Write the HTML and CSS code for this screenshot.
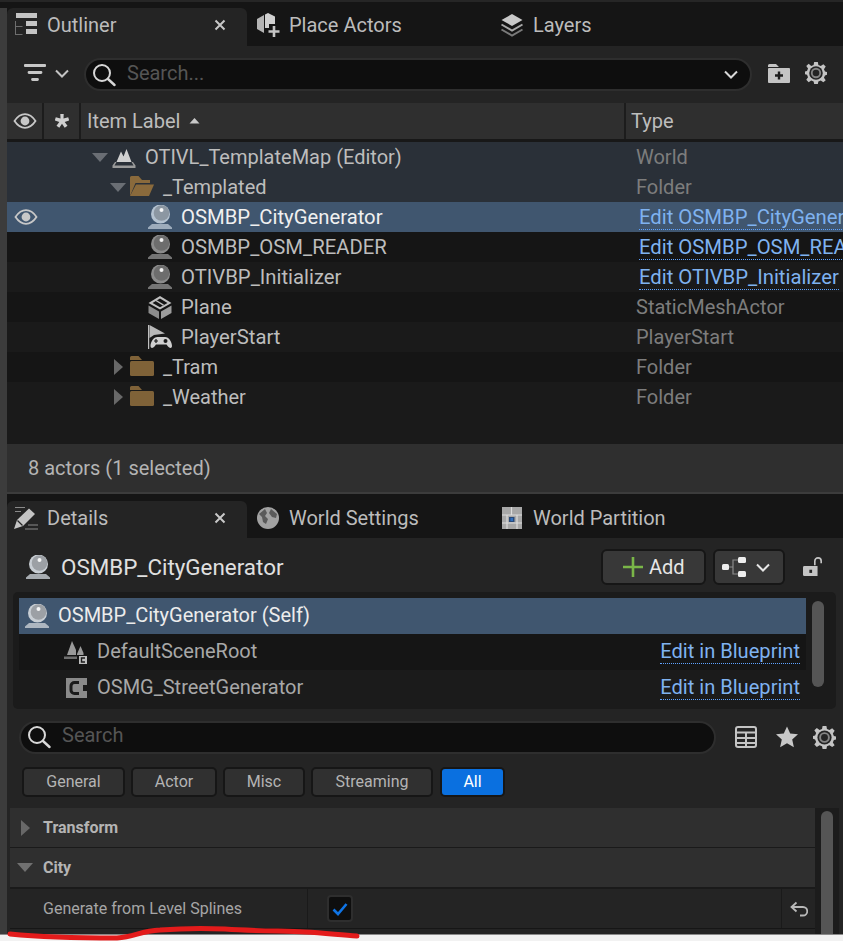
FILE: index.html
```html
<!DOCTYPE html>
<html>
  <head>
    <title>Outliner and Details</title>
    <link rel="stylesheet" href="styles.css">
  </head>
  <body>
    <!-- shared icons -->
    <svg class="icon-defs" width="0" height="0">
      <symbol id="i-eye" viewBox="0 0 24 24">
        <path d="M1.500 12C5 6.800 8.400 5.200 12 5.200S19 6.800 22.500 12C19 17.200 15.600 18.800 12 18.800S5 17.200 1.500 12Z" fill="none" stroke="currentColor" stroke-width="1.800"/>
        <circle cx="12" cy="12" r="4.400" fill="currentColor"/>
      </symbol>
      <symbol id="i-search" viewBox="0 0 24 24">
        <circle cx="10" cy="10" r="8" fill="none" stroke="currentColor" stroke-width="2"/>
        <path d="M16 16l6.500 6" stroke="currentColor" stroke-width="2.400" stroke-linecap="round"/>
      </symbol>
      <symbol id="i-chevron" viewBox="0 0 14 9">
        <path d="M1 1.500l6 6 6-6" fill="none" stroke="currentColor" stroke-width="2"/>
      </symbol>
      <symbol id="i-gear" viewBox="0 0 24 24">
        <path d="M10 0h4l.6 3.200 2.600 1.100L20 2.400 22.600 5l-1.900 2.800 1.100 2.600L24 11v3l-2.200.6-1.100 2.600 1.900 2.800L20 22l-2.800-1.900-2.600 1.100L14 24h-4l-.6-2.800-2.600-1.100L4 22l-2.600-2.600 1.900-2.800-1.100-2.600L0 13.400V10.400l2.200-.6 1.100-2.600L1.400 4.400 4 2l2.800 2.300 2.600-1.100Z" fill="currentColor"/>
        <circle cx="12" cy="12" r="7.400" fill="#242424"/>
        <circle cx="12" cy="12" r="4.600" fill="none" stroke="currentColor" stroke-opacity=".6" stroke-width="2"/>
      </symbol>
      <symbol id="i-actor" viewBox="0 0 24 24">
        <path d="M4 19h16l4 3.500V24H0v-1.500Z" fill="currentColor" fill-opacity=".8"/>
        <circle cx="12.500" cy="9" r="9.500" fill="currentColor"/>
        <circle cx="13.500" cy="8" r="7.800" fill="#000" fill-opacity=".22"/>
        <circle cx="13.500" cy="5" r="2" fill="#fff" fill-opacity=".9"/>
      </symbol>
      <symbol id="i-folder" viewBox="0 0 24 24">
        <path d="M0 2.500A1.500 1.500 0 0 1 1.500 1h7L12 5H0Z" fill="#7f6238"/>
        <rect x="0" y="6" width="24" height="15" rx="1.500" fill="#7f6238"/>
      </symbol>
      <symbol id="i-folder-open" viewBox="0 0 24 24">
        <path d="M0 21V2.500A1.500 1.500 0 0 1 1.500 1h7L12 5h8v3H5.500Z" fill="#8a6a3c"/>
        <path d="M0 21L6 9.500h18L19 21Z" fill="#8a6a3c"/>
      </symbol>
    </svg>

    <div class="top-line"></div>

    <div class="panels">
      <section class="outliner">
        <div class="tabs">
          <div class="tab tab-active">
            <svg class="tab-icon" viewBox="0 0 24 24">
              <path d="M2 0h21v5H2Z M12 8h11v5H12Z M12 16h11v5H12Z" fill="#c4c4c4"/>
              <path d="M1.500 8v14 M1.500 13.500h7 M1.500 21.500h7" fill="none" stroke="#6e6e6e" stroke-width="1"/>
            </svg>
            <span>Outliner</span>
            <svg class="tab-close" viewBox="0 0 12 12"><path d="M1.500 1.500l9 9M10.500 1.500l-9 9" stroke="#c8c8c8" stroke-width="2"/></svg>
          </div>
          <div class="tab">
            <svg class="tab-icon" viewBox="0 0 24 24">
              <path d="M1 6L8 2v18l-7-4Z" fill="#b4b4b4"/>
              <path d="M9 1.500L12 0l7 3.500V11h-6v4H9Z" fill="#d0d0d0"/>
              <path d="M18 13v11M12.500 18.500h11" stroke="#c4c4c4" stroke-width="2.600"/>
            </svg>
            <span>Place Actors</span>
          </div>
          <div class="tab">
            <svg class="tab-icon" viewBox="0 0 24 24">
              <path d="M12 1l10.500 6L12 13 1.500 7Z" fill="#c8c8c8"/>
              <path d="M1.500 11.500L12 17.500l10.500-6" fill="none" stroke="#a8a8a8" stroke-width="2"/>
              <path d="M1.500 16.500L12 22.500l10.500-6" fill="none" stroke="#7a7a7a" stroke-width="2"/>
            </svg>
            <span>Layers</span>
          </div>
        </div>

        <div class="toolbar">
          <svg class="filter-icon" viewBox="0 0 22 20">
            <path d="M1 2.500h20M5 9.500h12M8.500 16.500h5" stroke="#c8c8c8" stroke-width="2.800" stroke-linecap="round"/>
          </svg>
          <svg class="chevron"><use href="#i-chevron"/></svg>
          <div class="search search-outliner">
            <svg class="search-icon"><use href="#i-search"/></svg>
            <span class="search-hint">Search...</span>
            <svg class="chevron search-chevron"><use href="#i-chevron"/></svg>
          </div>
          <svg class="tool-icon" viewBox="0 0 22 22">
            <path d="M0 3.500A1.500 1.500 0 0 1 1.500 2H8l3 3H0Z" fill="#c4c4c4"/>
            <rect y="6" width="22" height="15" rx="1" fill="#c4c4c4"/>
            <path d="M11 9.500v8M7 13.500h8" stroke="#1c1c1c" stroke-width="2.400"/>
          </svg>
          <svg class="tool-icon gear"><use href="#i-gear"/></svg>
        </div>

        <div class="col-head">
          <div class="col col-eye"><svg class="eye"><use href="#i-eye"/></svg></div>
          <div class="col col-star">
            <svg class="star-small" viewBox="0 0 14 14"><path d="M5.300 0h3.400l-.2 4.600 4.700-1.300 1 3.200-4.500 1.400 2.800 3.800-2.800 2L7 9.800l-2.700 3.900-2.800-2 2.800-3.800L-.2 6.500l1-3.200 4.700 1.300Z" fill="#d0d0d0"/></svg>
          </div>
          <div class="col col-label">Item Label
            <svg class="sort-arrow" viewBox="0 0 10 6"><path d="M5 0l5 5.500H0Z" fill="#c8c8c8"/></svg>
          </div>
          <div class="col col-type">Type</div>
        </div>

        <div class="rows">
          <div class="row row-parent">
            <div class="cell-eye"></div>
            <div class="cell-label level-0">
              <span class="arrow-down"></span>
              <svg class="item-icon" viewBox="0 0 24 24">
                <path d="M4.500 17L9 6.500l2.500 5L14.500 4l5 13Z" fill="#d0d0d0"/>
                <path d="M0.500 23v-2.500L3 17h1.500l-2 3.500h19l-2-3.500H21l2.500 3.500V23Z" fill="#9a9a9a"/>
              </svg>
              <span>OTIVL_TemplateMap (Editor)</span>
            </div>
            <div class="cell-type">World</div>
          </div>
          <div class="row row-parent">
            <div class="cell-eye"></div>
            <div class="cell-label level-1">
              <span class="arrow-down"></span>
              <svg class="item-icon"><use href="#i-folder-open"/></svg>
              <span>_Templated</span>
            </div>
            <div class="cell-type">Folder</div>
          </div>
          <div class="row row-selected">
            <div class="cell-eye"><svg class="eye"><use href="#i-eye"/></svg></div>
            <div class="cell-label level-2">
              <svg class="item-icon actor-light"><use href="#i-actor"/></svg>
              <span>OSMBP_CityGenerator</span>
            </div>
            <div class="cell-type"><a class="link">Edit OSMBP_CityGenerator</a></div>
          </div>
          <div class="row row-dark">
            <div class="cell-eye"></div>
            <div class="cell-label level-2">
              <svg class="item-icon actor"><use href="#i-actor"/></svg>
              <span>OSMBP_OSM_READER</span>
            </div>
            <div class="cell-type"><a class="link">Edit OSMBP_OSM_READER</a></div>
          </div>
          <div class="row">
            <div class="cell-eye"></div>
            <div class="cell-label level-2">
              <svg class="item-icon actor"><use href="#i-actor"/></svg>
              <span>OTIVBP_Initializer</span>
            </div>
            <div class="cell-type"><a class="link">Edit OTIVBP_Initializer</a></div>
          </div>
          <div class="row row-dark">
            <div class="cell-eye"></div>
            <div class="cell-label level-2">
              <svg class="item-icon" viewBox="0 0 24 24">
                <path d="M12 1l11.500 7L12 14.500 .5 8Z M12 3.500L4.500 8l7.500 4.200L19.500 8Z" fill="#c0c0c0" fill-rule="evenodd"/>
                <path d="M8 5.500l7.500 4.600" stroke="#c0c0c0" stroke-width="1.400"/>
                <path d="M.5 10.500l10.500 6V24L.5 18Z" fill="#8c8c8c"/>
                <path d="M23.500 10.500l-10.500 6V24l10.500-6Z" fill="#9c9c9c"/>
              </svg>
              <span>Plane</span>
            </div>
            <div class="cell-type">StaticMeshActor</div>
          </div>
          <div class="row">
            <div class="cell-eye"></div>
            <div class="cell-label level-2">
              <svg class="item-icon" viewBox="0 0 24 24">
                <path d="M.6 0v24" stroke="#c0c0c0" stroke-width="1.200"/>
                <path d="M1.500 0L17 8.500 6 10l-4.500 3Z" fill="#b8b8b8"/>
                <path d="M9.500 12h7.500c4 0 7 5 7 9 0 2.500-2.500 2.500-4 .5L18.500 19.500H8l-1.500 2c-1.500 2-4 2-4-.5 0-4 3-9 7-9Z" fill="#d0d0d0"/>
                <path d="M8 14v4M6 16h4" stroke="#1a1a1a" stroke-width="1.200"/>
                <circle cx="17.500" cy="16" r="2" fill="#1a1a1a"/>
              </svg>
              <span>PlayerStart</span>
            </div>
            <div class="cell-type">PlayerStart</div>
          </div>
          <div class="row row-dark">
            <div class="cell-eye"></div>
            <div class="cell-label level-1">
              <span class="arrow-right"></span>
              <svg class="item-icon"><use href="#i-folder"/></svg>
              <span>_Tram</span>
            </div>
            <div class="cell-type">Folder</div>
          </div>
          <div class="row">
            <div class="cell-eye"></div>
            <div class="cell-label level-1">
              <span class="arrow-right"></span>
              <svg class="item-icon"><use href="#i-folder"/></svg>
              <span>_Weather</span>
            </div>
            <div class="cell-type">Folder</div>
          </div>
        </div>

        <div class="status">8 actors (1 selected)</div>
      </section>

      <section class="details">
        <div class="tabs tabs-details">
          <div class="tab tab-active">
            <svg class="tab-icon" viewBox="0 0 24 24">
              <path d="M0 23l3-9L15 2.500 21 8 9 20Z" fill="#c4c4c4"/>
              <path d="M3.500 14.500L8.500 19.500" stroke="#242424" stroke-width="1.200"/>
              <path d="M1 1.500h10M1 5.500h6M14 19h10M11 23h13" stroke="#8a8a8a" stroke-width="1"/>
            </svg>
            <span>Details</span>
            <svg class="tab-close" viewBox="0 0 12 12"><path d="M1.500 1.500l9 9M10.500 1.500l-9 9" stroke="#c8c8c8" stroke-width="2"/></svg>
          </div>
          <div class="tab">
            <svg class="tab-icon" viewBox="0 0 24 24">
              <circle cx="12" cy="12" r="11" fill="#a2a2a2"/>
              <path d="M3 8l6-5 2 4-2 3 3 3-2 5-3-2-1-5Z M15 3l6 5-1 4-4-1-3-4Z" fill="#3c3c3c" fill-opacity=".7"/>
            </svg>
            <span>World Settings</span>
          </div>
          <div class="tab">
            <svg class="tab-icon" viewBox="0 0 24 24">
              <rect x="2" y="1" width="20" height="22" fill="#a8a8a8"/>
              <path d="M11.500 1v8M2 9h20M2 17h20M7 9v14M17 9v14" stroke="#dcdcdc" stroke-width="1.200"/>
              <rect x="9" y="11" width="5.500" height="5" fill="#2a4a78"/>
              <rect x="10.500" y="12" width="2.500" height="3" fill="#2f6fc0"/>
            </svg>
            <span>World Partition</span>
          </div>
        </div>

        <div class="title-bar">
          <svg class="item-icon actor-white"><use href="#i-actor"/></svg>
          <span class="title">OSMBP_CityGenerator</span>
          <button class="btn btn-add">
            <svg class="plus" viewBox="0 0 20 20"><path d="M10 0v20M0 10h20" stroke="#7ab648" stroke-width="2.600"/></svg>
            Add
          </button>
          <button class="btn btn-tree">
            <svg class="tree-icon" viewBox="0 0 24 20">
              <rect x="0" y="7" width="7" height="6" rx="1.500" fill="#eee"/>
              <rect x="16" y="0" width="8" height="6" rx="1.500" fill="#eee"/>
              <rect x="16" y="14" width="8" height="6" rx="1.500" fill="#eee"/>
              <path d="M7 10h4M16 3h-5v14h5" fill="none" stroke="#8a8a8a" stroke-width="1.200"/>
            </svg>
            <svg class="chevron chevron-white"><use href="#i-chevron"/></svg>
          </button>
          <svg class="lock" viewBox="0 0 22 22">
            <path d="M13 9V4.500a3.500 3.500 0 0 1 7 0V7" fill="none" stroke="#c4c4c4" stroke-width="1.800"/>
            <path d="M1.500 10H16v11H1.500A1.500 1.500 0 0 1 0 19.500v-8A1.500 1.500 0 0 1 1.500 10Z" fill="#c4c4c4"/>
            <rect x="7" y="14" width="3" height="3.500" fill="#242424"/>
          </svg>
        </div>

        <div class="tree-box">
          <div class="tree-rows">
            <div class="tree-row tree-row-selected">
              <svg class="item-icon actor-white"><use href="#i-actor"/></svg>
              <span>OSMBP_CityGenerator (Self)</span>
            </div>
            <div class="tree-row tree-child tree-row-dark">
              <svg class="item-icon" viewBox="0 0 24 24">
                <path d="M3 15L8 1l4 9v5Z" fill="#9a9a9a"/>
                <path d="M0 16.500h13v2.500H0Z" fill="#6e6e6e"/>
                <path d="M13 14l3.500-8 3 7v2h-6.500Z" fill="#9a9a9a"/>
                <rect x="15" y="16" width="8" height="8" fill="#bcbcbc"/>
                <path d="M21 18h-3.500v4H21" fill="none" stroke="#1a1a1a" stroke-width="1.400"/>
              </svg>
              <span>DefaultSceneRoot</span>
              <a class="link link-right">Edit in Blueprint</a>
            </div>
            <div class="tree-row tree-child">
              <svg class="item-icon c-icon" viewBox="0 0 24 24">
                <path d="M2 2h21v7h-4v6h4v7H2Z" fill="#8a8a8a"/>
                <path d="M15 6.500H10.500A3.500 3.500 0 0 0 7 10v4a3.500 3.500 0 0 0 3.500 3.500H15" fill="none" stroke="#1a1a1a" stroke-width="3"/>
              </svg>
              <span>OSMG_StreetGenerator</span>
              <a class="link link-right">Edit in Blueprint</a>
            </div>
          </div>
          <div class="tree-track"><div class="tree-thumb"></div></div>
        </div>

        <div class="filter-bar">
          <div class="search search-details">
            <svg class="search-icon"><use href="#i-search"/></svg>
            <span class="search-hint">Search</span>
          </div>
          <svg class="tool-icon table-icon" viewBox="0 0 22 22">
            <rect x="1" y="1" width="20" height="20" rx="2" fill="none" stroke="#c4c4c4" stroke-width="2"/>
            <path d="M1 6.500h20M1 12h20M1 17h20" stroke="#c4c4c4" stroke-width="2"/>
            <path d="M11 7v14" stroke="#c4c4c4" stroke-width="2"/>
          </svg>
          <svg class="tool-icon star" viewBox="0 0 22 22"><path d="M11 .5l3.200 7 7.800.8-5.800 5.200 1.700 7.700L11 17.200l-6.900 4 1.700-7.700L0 8.300l7.800-.8Z" fill="#c8c8c8"/></svg>
          <svg class="tool-icon gear gear-details"><use href="#i-gear"/></svg>
        </div>

        <div class="chips">
          <span class="chip chip-general">General</span>
          <span class="chip chip-actor">Actor</span>
          <span class="chip chip-misc">Misc</span>
          <span class="chip chip-streaming">Streaming</span>
          <span class="chip chip-all">All</span>
        </div>

        <div class="props">
          <div class="props-list">
            <div class="prop-section">
              <span class="arrow-right arrow-section"></span>
              <span>Transform</span>
            </div>
            <div class="prop-section prop-section-open">
              <span class="arrow-down arrow-section-down"></span>
              <span>City</span>
            </div>
            <div class="prop-row">
              <div class="prop-name">Generate from Level Splines</div>
              <div class="prop-value">
                <span class="checkbox">
                  <svg viewBox="0 0 16 14"><path d="M1.500 7.500l4.500 4.500 8.500-10" fill="none" stroke="#0f74e6" stroke-width="2.600"/></svg>
                </span>
              </div>
              <div class="prop-reset">
                <svg viewBox="0 0 18 16"><path d="M6.500 1.500L1.500 6l5 4.500M1.500 6H13a4 4 0 0 1 0 8.500H10" fill="none" stroke="#b8b8b8" stroke-width="1.800"/></svg>
              </div>
            </div>
          </div>
          <div class="props-track"><div class="props-thumb"></div></div>
        </div>
      </section>
    </div>

    <!-- red marker stroke drawn over the screenshot -->
    <svg class="marker" viewBox="0 0 843 941">
      <path d="M10 934C40 937 85 938 117 938C135 937 140 931 160 930C185 928 205 928 225 929C255 931 285 931 305 932C325 933 340 935 357 936" fill="none" stroke="#e31b1b" stroke-width="5" stroke-linecap="round"/>
    </svg>
  </body>
</html>
```

FILE: styles.css
```css
/* Editor panels, dark theme */
html {
  background-color: #f2f2f2;
}
body {
  position: relative;
  width: 843px;
  height: 941px;
  margin: 0;
  overflow: hidden;
  font-family: Roboto, "Liberation Sans", sans-serif;
  font-size: 20px;
  color: #bdbdbd;
}
svg {
  display: block;
  flex: none;
}
.icon-defs {
  position: absolute;
}

.top-line {
  height: 6px;
  background-color: #151515;
  border-top: 2px solid #262626;
}
.panels {
  height: 926px;
  padding-left: 7px;
  background-color: #3c3c3c;
  border-bottom: 1px solid #8a8a8a;
}

/* tabs */
.tabs {
  display: flex;
  height: 38px;
  background-color: #151515;
}
.tabs-details {
  height: 44px;
  padding-top: 7px;
  box-sizing: border-box;
}
.tab {
  display: flex;
  align-items: center;
  gap: 9px;
  width: 244px;
  padding: 0 0 4px 9px;
  box-sizing: border-box;
  color: #bcbcbc;
}
.tabs-details .tab {
  padding-bottom: 3px;
}
.tab-active,
.tabs-details .tab-active {
  width: 240px;
  padding-left: 7px;
  background-color: #242424;
  border-radius: 6px 6px 0 0;
}
.tab-icon {
  width: 24px;
  height: 24px;
}
.tab-close {
  width: 12px;
  height: 12px;
  margin-left: auto;
  margin-right: 21px;
}

/* outliner */
.outliner {
  height: 484px;
  display: flex;
  flex-direction: column;
}
.toolbar {
  display: flex;
  align-items: center;
  height: 57px;
  padding: 0 16px 3px 17px;
  box-sizing: border-box;
  background-color: #242424;
}
.filter-icon {
  width: 22px;
  height: 20px;
}
.chevron {
  width: 14px;
  height: 9px;
  color: #c4c4c4;
}
.toolbar > .chevron {
  margin-left: 9px;
}
.search {
  display: flex;
  align-items: center;
  background-color: #0e0e0e;
  border: 2px solid #2e2e2e;
  border-radius: 17px;
  box-sizing: border-box;
  height: 33px;
}
.search-outliner {
  width: 668px;
  margin: 3px 0 0 15px;
  padding: 0 12px 0 6px;
}
.search-icon {
  width: 24px;
  height: 24px;
  color: #d8d8d8;
}
.search-hint {
  margin-left: 11px;
  padding-bottom: 4px;
  color: #555;
}
.search-chevron {
  margin-left: auto;
  color: #d8d8d8;
}
.tool-icon {
  width: 22px;
  height: 22px;
}
.toolbar .tool-icon {
  margin-left: 16px;
}
.toolbar .gear {
  color: #c4c4c4;
  margin-left: 15px;
}

.col-head {
  display: flex;
  flex: none;
  height: 36px;
  background-color: #2f2f2f;
  border-bottom: 3px solid #181818;
}
.col {
  display: flex;
  align-items: center;
  border-right: 2px solid #1c1c1c;
  box-sizing: border-box;
}
.col-eye {
  width: 37px;
  justify-content: center;
}
.col-star {
  width: 37px;
  justify-content: center;
}
.col-label {
  width: 545px;
  padding-left: 6px;
  gap: 9px;
}
.col-type {
  padding-left: 5px;
  border-right: 0;
}
.eye {
  width: 24px;
  height: 24px;
  color: #c8c8c8;
}
.star-small {
  width: 14px;
  height: 14px;
}
.sort-arrow {
  width: 11px;
  height: 6px;
}

.rows {
  flex: 1;
  background-color: #1a1a1a;
}
.row {
  display: flex;
  align-items: center;
  height: 30px;
  overflow: hidden;
  white-space: nowrap;
}
.row-dark {
  background-color: #151515;
}
.row-parent {
  background-color: #2a3038;
}
.row-selected {
  background-color: #40566f;
  color: #f0f0f0;
}
.cell-eye {
  display: flex;
  justify-content: center;
  width: 37px;
  flex: none;
}
.cell-label {
  display: flex;
  align-items: center;
  width: 592px;
  flex: none;
  box-sizing: border-box;
}
.level-0 {
  padding-left: 48px;
}
.level-1 {
  padding-left: 66px;
}
.level-2 {
  padding-left: 104px;
  font-size: 20.3px;
}
.cell-type {
  color: #7d7d7d;
}
.item-icon {
  width: 24px;
  height: 24px;
  margin-right: 9px;
}
.actor {
  color: #8c8c8c;
}
.actor-light {
  color: #b4c2d0;
}
.actor-white {
  color: #c8ced4;
}
.arrow-down {
  width: 0;
  height: 0;
  margin-right: 4px;
  border-left: 8px solid transparent;
  border-right: 8px solid transparent;
  border-top: 9px solid #6a6e74;
}
.arrow-right {
  width: 0;
  height: 0;
  margin-right: 7px;
  margin-left: 4px;
  border-top: 8px solid transparent;
  border-bottom: 8px solid transparent;
  border-left: 9px solid #686868;
}
.link {
  color: #7fb2f0;
  border-bottom: 1px dotted #5ea2ff;
  line-height: 23px;
  display: inline-block;
}
.row .link {
  margin-left: 3px;
  font-size: 20.3px;
}
.status {
  height: 48px;
  padding-left: 21px;
  display: flex;
  align-items: center;
  background-color: #2f2f2f;
  color: #b4b4b4;
  flex: none;
}

/* details */
.details {
  height: 440px;
  margin-top: 2px;
  background-color: #242424;
}
.title-bar {
  display: flex;
  align-items: center;
  height: 54px;
  padding: 4px 20px 0 19px;
  box-sizing: border-box;
}
.title {
  margin: 0 auto 0 2px;
  font-size: 22.4px;
  color: #e0e0e0;
}
.btn {
  display: flex;
  align-items: center;
  height: 36px;
  font: inherit;
  color: #e6e6e6;
  background-color: #383838;
  border: 2px solid #161616;
  border-radius: 6px;
}
.btn-add {
  width: 105px;
  padding: 0 0 0 20px;
  gap: 6px;
}
.plus {
  width: 20px;
  height: 20px;
}
.btn-tree {
  width: 72px;
  margin-left: 7px;
  padding: 0 0 0 7px;
  gap: 10px;
}
.tree-icon {
  width: 24px;
  height: 20px;
}
.chevron-white {
  color: #e6e6e6;
}
.lock {
  width: 20px;
  height: 20px;
  margin-left: 18px;
}

.tree-box {
  display: flex;
  width: 823px;
  height: 117px;
  margin-left: 6px;
  padding: 6px 0 0 6px;
  box-sizing: border-box;
  background-color: #1b1b1b;
  border-radius: 5px;
}
.tree-rows {
  width: 787px;
}
.tree-row {
  display: flex;
  align-items: center;
  height: 36px;
  padding-right: 6px;
  white-space: nowrap;
}
.tree-row span {
  margin-bottom: 2px;
}
.tree-row-selected {
  background-color: #40566f;
  color: #ececec;
  padding-left: 6px;
}
.tree-row-selected .item-icon {
  margin-right: 9px;
}
.tree-row-dark {
  background-color: #151515;
}
.tree-child {
  padding-left: 45px;
  color: #a8a8a8;
}
.link-right {
  margin: 0 0 2px auto;
  line-height: 24px;
  font-size: 20.1px;
}
.tree-track {
  margin-left: 6px;
  padding-top: 3px;
}
.tree-thumb {
  width: 12px;
  height: 86px;
  background-color: #555;
  border-radius: 6px;
}

.filter-bar {
  display: flex;
  align-items: center;
  height: 58px;
  padding: 0 0 2px 12px;
  box-sizing: border-box;
}
.search-details {
  width: 697px;
  height: 33px;
  padding-left: 6px;
}
.table-icon {
  margin-left: 19px;
}
.star {
  margin-left: 19px;
}
.gear-details {
  margin-left: 15px;
  color: #c4c4c4;
  width: 23px;
  height: 23px;
}

.chips {
  display: flex;
  gap: 6px;
  height: 30px;
  padding-left: 15px;
}
.chip {
  display: flex;
  align-items: center;
  justify-content: center;
  box-sizing: border-box;
  height: 30px;
  padding-bottom: 1px;
  font-size: 16px;
  color: #b4b4b4;
  background-color: #303030;
  border: 2px solid #161616;
  border-radius: 5px;
}
.chip-general {
  width: 103px;
}
.chip-actor {
  width: 86px;
}
.chip-misc {
  width: 82px;
}
.chip-streaming {
  width: 122px;
}
.chip-all {
  width: 65px;
  margin-left: 1px;
  color: #fff;
  background-color: #0a70e0;
}

.props {
  display: flex;
  margin: 11px 0 0 3px;
}
.props-list {
  width: 805px;
}
.prop-section {
  display: flex;
  align-items: center;
  height: 39px;
  padding-left: 11px;
  background-color: #2f2f2f;
  border-bottom: 1px solid #1a1a1a;
  font-size: 16px;
  font-weight: bold;
  color: #b4b4b4;
}
.prop-section-open {
  padding-left: 7px;
  border-bottom-width: 2px;
}
.arrow-section {
  margin: 0 13px 0 0;
}
.arrow-section-down {
  margin-right: 10px;
  border-top-color: #707070;
}
.prop-row {
  display: flex;
  height: 39px;
  border-bottom: 1px solid #161616;
  font-size: 16px;
}
.prop-name {
  display: flex;
  align-items: center;
  width: 298px;
  padding-left: 33px;
  box-sizing: border-box;
  border-right: 1px solid #1a1a1a;
  color: #a6a6a6;
}
.prop-value {
  display: flex;
  align-items: center;
  width: 473px;
  padding-left: 19px;
  box-sizing: border-box;
}
.checkbox {
  display: flex;
  align-items: center;
  justify-content: center;
  width: 26px;
  height: 27px;
  box-sizing: border-box;
  background-color: #0e0e0e;
  border: 2px solid #2e2e2e;
  border-radius: 4px;
}
.checkbox svg {
  width: 16px;
  height: 14px;
}
.prop-reset {
  display: flex;
  align-items: center;
  justify-content: center;
  flex: 1;
  border-left: 1px solid #1a1a1a;
}
.prop-reset svg {
  width: 18px;
  height: 16px;
}
.props-track {
  width: 24px;
  height: 126px;
  padding-left: 6px;
  box-sizing: border-box;
  background-color: #1c1c1c;
}
.props-thumb {
  width: 12px;
  height: 123px;
  margin-top: 3px;
  background-color: #555;
  border-radius: 6px 6px 0 0;
}

.marker {
  position: absolute;
  top: 0;
  left: 0;
  width: 843px;
  height: 941px;
  pointer-events: none;
}
```
